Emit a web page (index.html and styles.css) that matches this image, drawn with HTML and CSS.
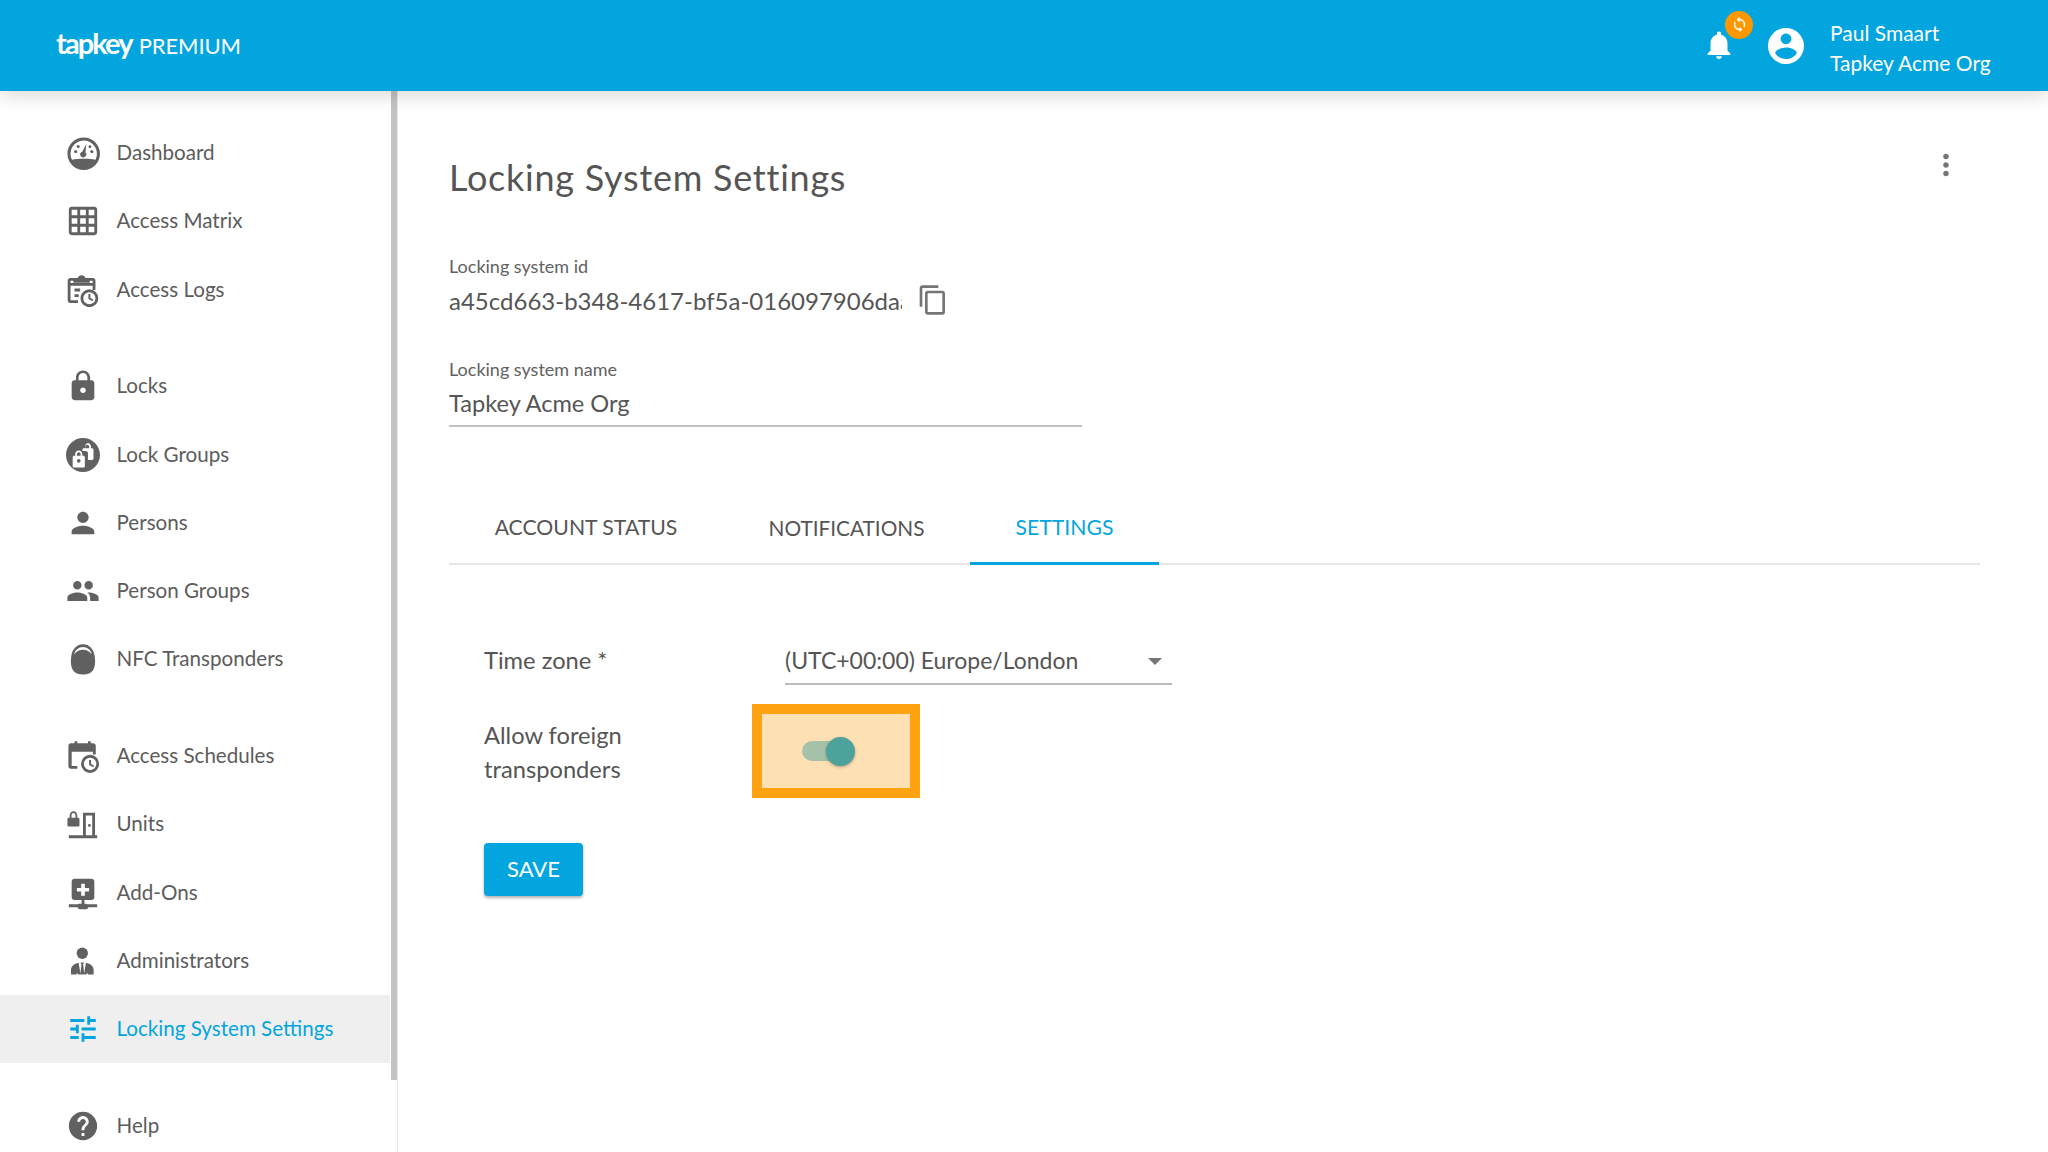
FILE: index.html
```html
<!DOCTYPE html>
<html lang="en">
<head>
<meta charset="utf-8">
<title>Locking System Settings</title>
<link rel="stylesheet" href="styles.css">
</head>
<body>
<header class="topbar">
  <div class="brand"><span class="brand-name">tapkey</span><span class="brand-tier">PREMIUM</span></div>
  <div class="top-actions">
    <div class="bell-wrap">
      <svg class="bell" viewBox="0 0 24 24"><path d="M12 22c1.1 0 2-.9 2-2h-4c0 1.1.89 2 2 2zm6-6v-5c0-3.07-1.64-5.64-4.5-6.32V4c0-.83-.67-1.5-1.5-1.5s-1.5.67-1.5 1.5v.68C7.63 5.36 6 7.92 6 11v5l-2 2v1h16v-1l-2-2z"/></svg>
      <span class="badge"><svg viewBox="0 0 24 24"><path d="M12 4V1L8 5l4 4V6c3.31 0 6 2.69 6 6 0 1.01-.25 1.97-.7 2.8l1.46 1.46C19.54 15.03 20 13.57 20 12c0-4.42-3.58-8-8-8zm0 14c-3.31 0-6-2.69-6-6 0-1.01.25-1.97.7-2.8L5.24 7.74C4.46 8.97 4 10.43 4 12c0 4.42 3.58 8 8 8v3l4-4-4-4v3z"/></svg></span>
    </div>
    <svg class="avatar" viewBox="2 2 20 20"><path d="M12 2C6.48 2 2 6.48 2 12s4.48 10 10 10 10-4.48 10-10S17.52 2 12 2zm0 3c1.66 0 3 1.34 3 3s-1.34 3-3 3-3-1.34-3-3 1.34-3 3-3zm0 14.2c-2.5 0-4.71-1.28-6-3.22.03-1.99 4-3.08 6-3.08 1.99 0 5.97 1.09 6 3.08-1.29 1.94-3.5 3.22-6 3.22z"/></svg>
    <div class="user"><div>Paul Smaart</div><div>Tapkey Acme Org</div></div>
  </div>
</header>
<div class="shell">
  <aside class="sidebar">
    <nav class="nav-group">
      <a class="nav-item"><svg class="ico" viewBox="0 0 24 24"><path fill-rule="evenodd" d="M12.5 1C6.150 1 1 6.150 1 12.500S6.150 24 12.500 24 24 18.850 24 12.500 18.850 1 12.500 1zm0 2.200a9.300 9.300 0 0 1 9.300 9.300c0 1.500-.35 2.900-1 4.200-2.200-.5-5-.7-8.300-.7s-6.100.2-8.300.7a9.300 9.300 0 0 1 8.300-13.500z"/><path d="M14.400 5.600l-.7 6a2.100 2.100 0 1 1-3-.1c.3-.2.5-.3.8-.4l2.900-5.500z"/><circle cx="6.800" cy="11" r="1.100"/><circle cx="8.600" cy="7.400" r="1.100"/><circle cx="18.200" cy="11" r="1.100"/><circle cx="16.900" cy="7.600" r="1"/></svg><span>Dashboard</span></a>
      <a class="nav-item"><svg class="ico" viewBox="0 0 24 24"><path d="M20 2H4c-1.1 0-2 .9-2 2v16c0 1.1.9 2 2 2h16c1.1 0 2-.9 2-2V4c0-1.1-.9-2-2-2zM8 20H4v-4h4v4zm0-6H4v-4h4v4zm0-6H4V4h4v4zm6 12h-4v-4h4v4zm0-6h-4v-4h4v4zm0-6h-4V4h4v4zm6 12h-4v-4h4v4zm0-6h-4v-4h4v4zm0-6h-4V4h4v4z"/></svg><span>Access Matrix</span></a>
      <a class="nav-item"><svg class="ico" viewBox="0 0 24 24"><path fill-rule="evenodd" d="M3 3.5h5.2C8.6 2.300 9.700 1.500 11 1.500s2.400.8 2.800 2H19c1 0 1.800.8 1.800 1.800V12h-2V9H3.200v10.200H8.500v2H3c-1 0-1.800-.8-1.800-1.800V5.300C1.200 4.300 2 3.500 3 3.500zM3.200 5.500V7h15.600V5.500h-2v1.300H5.200V5.500z"/><path d="M6 11h4v2H6zM6 15h3v2H6z"/><path fill-rule="evenodd" d="M16.500 11.500a6.300 6.300 0 1 0 0 12.600 6.300 6.300 0 0 0 0-12.600zm0 2a4.300 4.300 0 1 1 0 8.600 4.300 4.300 0 0 1 0-8.600z"/><path d="M15.800 14.800h1.400v2.800l2.200 1.300-.7 1.100-2.900-1.700z"/></svg><span>Access Logs</span></a>
    </nav>
    <nav class="nav-group">
      <a class="nav-item"><svg class="ico" viewBox="0 0 24 24"><path d="M18 8h-1V6c0-2.760-2.240-5-5-5S7 3.240 7 6v2H6c-1.100 0-2 .9-2 2v10c0 1.100.9 2 2 2h12c1.100 0 2-.9 2-2V10c0-1.100-.9-2-2-2zm-6 9c-1.100 0-2-.9-2-2s.9-2 2-2 2 .9 2 2-.9 2-2 2zm3.100-9H8.900V6c0-1.710 1.390-3.100 3.100-3.100 1.710 0 3.100 1.390 3.100 3.100v2z"/></svg><span>Locks</span></a>
      <a class="nav-item"><svg class="ico" viewBox="0 0 24 24"><path fill-rule="evenodd" d="M12 0C5.400 0 0 5.400 0 12s5.400 12 12 12 12-5.400 12-12S18.600 0 12 0zM15 3.500c1.500 0 2.600 1.100 2.600 2.500v1.200h.8c.6 0 1 .5 1 1v6.300c0 .6-.4 1-1 1h-2.900v-4.700c0-.9-.7-1.600-1.600-1.600h-2.300V8.200c0-.5.4-1 1-1h.9V6c0-1.400 1-2.500 2.500-2.500zm0 1.200c-.7 0-1.300.6-1.300 1.300v1.200h2.600V6c0-.7-.6-1.300-1.300-1.300zm-6 4.200c1.500 0 2.500 1.100 2.500 2.500v1.200h.8c.6 0 1 .5 1 1v6.300c0 .6-.4 1-1 1H5.700c-.6 0-1-.4-1-1V13.600c0-.5.4-1 1-1h.8v-1.200c0-1.400 1.100-2.500 2.500-2.500zm0 1.200c-.7 0-1.300.6-1.300 1.300v1.200h2.600v-1.200c0-.7-.6-1.300-1.300-1.300zm0 4.700a1.300 1.300 0 1 0 0 2.600 1.300 1.300 0 0 0 0-2.600z"/></svg><span>Lock Groups</span></a>
      <a class="nav-item"><svg class="ico" viewBox="0 0 24 24"><path d="M12 12c2.210 0 4-1.790 4-4s-1.790-4-4-4-4 1.790-4 4 1.790 4 4 4zm0 2c-2.670 0-8 1.340-8 4v2h16v-2c0-2.660-5.330-4-8-4z"/></svg><span>Persons</span></a>
      <a class="nav-item"><svg class="ico" viewBox="0 0 24 24"><path d="M16 11c1.660 0 2.990-1.340 2.990-3S17.660 5 16 5c-1.660 0-3 1.340-3 3s1.340 3 3 3zm-8 0c1.660 0 2.990-1.340 2.990-3S9.660 5 8 5C6.340 5 5 6.340 5 8s1.340 3 3 3zm0 2c-2.330 0-7 1.170-7 3.500V19h14v-2.500c0-2.330-4.670-3.500-7-3.500zm8 0c-.29 0-.62.02-.97.05 1.160.84 1.970 1.970 1.970 3.450V19h6v-2.500c0-2.330-4.670-3.500-7-3.500z"/></svg><span>Person Groups</span></a>
      <a class="nav-item"><svg class="ico" viewBox="0 0 24 24"><path fill-rule="evenodd" d="M12 1.500C7.500 1.500 4.500 5 3.800 9.500c-.7 4.200-.5 7.800 1 10.200 1.300 2 4 3.300 7.200 3.300s5.900-1.300 7.200-3.300c1.500-2.400 1.700-6 1-10.200C19.500 5 16.500 1.500 12 1.500zm0 2c3 0 5.400 2 6.300 5.100C16.500 6.500 14.300 5.500 12 5.500s-4.500 1-6.300 3.100C6.600 5.500 9 3.500 12 3.500z"/></svg><span>NFC Transponders</span></a>
    </nav>
    <nav class="nav-group">
      <a class="nav-item"><svg class="ico" viewBox="0 0 24 24"><path fill-rule="evenodd" d="M3.500 3H6V1.500h2V3h7.500V1.500h2V3h1.700c1 0 1.800.8 1.800 1.800V11h-2V9H4v10h4v2H3.500c-1 0-1.800-.8-1.800-1.800V4.800C1.700 3.800 2.500 3 3.500 3z"/><path fill-rule="evenodd" d="M17 11.200a6.400 6.400 0 1 0 0 12.800 6.400 6.400 0 0 0 0-12.800zm0 2a4.400 4.400 0 1 1 0 8.800 4.400 4.400 0 0 1 0-8.800z"/><path d="M16.300 14.800h1.400v2.800l2.200 1.300-.7 1.100-2.900-1.700z"/></svg><span>Access Schedules</span></a>
      <a class="nav-item"><svg class="ico" viewBox="0 0 24 24"><path d="M1 8.500c0-.6.4-1 1-1h.6V5.800C2.600 4.200 3.800 3 5.300 3S8 4.200 8 5.800V7.500h.5c.6 0 1 .4 1 1v4.300c0 .6-.4 1-1 1H2c-.6 0-1-.4-1-1zM3.900 7.500h2.800V5.800c0-.8-.6-1.500-1.400-1.500s-1.400.7-1.400 1.500z"/><path fill-rule="evenodd" d="M12 4h8.500v16H22v2H2v-2h10zm2 2v14h4.500V6z"/><circle cx="16.500" cy="13" r="1"/></svg><span>Units</span></a>
      <a class="nav-item"><svg class="ico" viewBox="0 0 24 24"><path fill-rule="evenodd" d="M6 2h12c1.100 0 2 .9 2 2v11c0 1.100-.9 2-2 2h-5v2.500h1c.3 0 .6.2.8.5H22v2h-6.200c-.2.9-1 1.500-1.800 1.500h-4c-.8 0-1.600-.6-1.800-1.500H2v-2h6.200c.2-.3.5-.5.8-.5h2V17H6c-1.100 0-2-.9-2-2V4c0-1.100.9-2 2-2zm4.700 3.500v3h-3v2.400h3v3h2.600v-3h3V8.500h-3v-3z"/></svg><span>Add-Ons</span></a>
      <a class="nav-item"><svg class="ico" viewBox="0 0 24 24"><circle cx="11.500" cy="6.500" r="4"/><path fill-rule="evenodd" d="M3.500 21.500v-3.300c0-2.300 1.500-3.700 3.700-4.500l1.700-.5 1.400 8.300H8.800l-1-1-.3 1zm16 0v-3.300c0-2.300-1.500-3.700-3.700-4.500l-1.700-.5-1.400 8.300h1.500l1-1 .3 1zM10.300 13h2.400l-.6 1.500.8 7h-2.800l.8-7z"/></svg><span>Administrators</span></a>
      <a class="nav-item active"><svg class="ico" viewBox="0 0 24 24"><path d="M3 17v2h6v-2H3zM3 5v2h10V5H3zm10 16v-2h8v-2h-8v-2h-2v6h2zM7 9v2H3v2h4v2h2V9H7zm14 4v-2H11v2h10zm-6-4h2V7h4V5h-4V3h-2v6z"/></svg><span>Locking System Settings</span></a>
    </nav>
    <nav class="nav-group">
      <a class="nav-item"><svg class="ico" viewBox="0 0 24 24"><path d="M12 2C6.480 2 2 6.480 2 12s4.480 10 10 10 10-4.480 10-10S17.520 2 12 2zm1 17h-2v-2h2v2zm2.070-7.750l-.9.92C13.450 12.900 13 13.500 13 15h-2v-.5c0-1.100.45-2.100 1.170-2.830l1.240-1.260c.37-.36.59-.86.59-1.410 0-1.100-.9-2-2-2s-2 .9-2 2H8c0-2.210 1.790-4 4-4s4 1.790 4 4c0 .88-.36 1.680-.93 2.250z"/></svg><span>Help</span></a>
    </nav>
    <div class="scroll-thumb"></div>
  </aside>
  <main class="content">
    <div class="title-row">
      <h1 class="title">Locking System Settings</h1>
      <svg class="more" viewBox="0 0 24 24"><path d="M12 8c1.100 0 2-.9 2-2s-.9-2-2-2-2 .9-2 2 .9 2 2 2zm0 2c-1.100 0-2 .9-2 2s.9 2 2 2 2-.9 2-2-.9-2-2-2zm0 6c-1.100 0-2 .9-2 2s.9 2 2 2 2-.9 2-2-.9-2-2-2z"/></svg>
    </div>
    <div class="field-id">
      <div class="field-label">Locking system id</div>
      <div class="id-row">
        <span class="id-value">a45cd663-b348-4617-bf5a-016097906daa</span>
        <svg class="copy" viewBox="0 0 24 24"><path d="M16 1H4c-1.100 0-2 .9-2 2v14h2V3h12V1zm3 4H8c-1.100 0-2 .9-2 2v14c0 1.100.9 2 2 2h11c1.100 0 2-.9 2-2V7c0-1.100-.9-2-2-2zm0 16H8V7h11v14z"/></svg>
      </div>
    </div>
    <div class="field-name">
      <div class="field-label">Locking system name</div>
      <div class="name-value">Tapkey Acme Org</div>
    </div>
    <div class="tabs">
      <div class="tab tab-account">ACCOUNT STATUS</div>
      <div class="tab tab-notifications">NOTIFICATIONS</div>
      <div class="tab tab-settings">SETTINGS</div>
    </div>
    <form class="settings">
      <div class="row-time">
        <div class="row-label">Time zone *</div>
        <div class="select"><span>(UTC+00:00) Europe/London</span><i class="caret"></i></div>
      </div>
      <div class="row-foreign">
        <div class="row-label foreign-label">Allow foreign transponders</div>
        <div class="highlight"><div class="switch"><div class="track"></div><div class="thumb"></div></div></div>
      </div>
      <div class="save">SAVE</div>
    </form>
  </main>
</div>
</body>
</html>
```
FILE: styles.css
```css
* { box-sizing: border-box; }
html, body { margin: 0; height: 100%; }
body {
  width: 2048px; height: 1152px; overflow: hidden; background: #fff;
  font-family: "Lato", "Noto Sans", sans-serif; color: #5c5c5c;
  display: flex; flex-direction: column;
}
.topbar {
  height: 91px; flex: none; background: #03a5df; color: #fff;
  display: flex; align-items: center; justify-content: space-between;
  padding: 0 48px 0 56px; position: relative; z-index: 2;
  box-shadow: 0 4px 18px rgba(0,0,0,.16);
}
.brand { display: flex; align-items: baseline; gap: 7px; margin-top: -7px; }
.brand-name { font-size: 29px; font-weight: 700; letter-spacing: -1.9px; }
.brand-tier { font-size: 22px; font-weight: 400; letter-spacing: -.1px; }
.top-actions { display: flex; align-items: center; }
.bell-wrap { position: relative; width: 34px; height: 34px; margin-right: 32px; }
.bell { width: 34px; height: 34px; fill: #fff; display: block; margin-top: -1px; }
.badge {
  position: absolute; left: 23px; top: -18px; width: 28px; height: 28px; border-radius: 50%;
  background: #ff9800; display: flex; align-items: center; justify-content: center;
}
.badge svg { width: 17px; height: 17px; fill: #fff; }
.avatar { width: 36px; height: 36px; fill: #fff; margin-right: 26px; display: block; }
.user { font-size: 21px; line-height: 30px; width: 170px; padding-top: 5px; }

.shell { flex: 1; display: flex; min-height: 0; }
.sidebar {
  width: 398px; flex: none; position: relative; padding: 28px 7px 0 0;
  border-right: 1px solid #e8e8e8; display: flex; flex-direction: column; gap: 28.5px;
}
.scroll-thumb { position: absolute; left: 391px; top: 0; width: 6px; height: 989px; background: #c4c4c4; }
.nav-item {
  height: 68.25px; display: flex; align-items: center; gap: 17px; padding-left: 66px;
  font-size: 20.6px; color: #5c5c5c;
}
.nav-item span { margin-top: -2px; margin-left: -.5px; }
.ico { width: 34px; height: 34px; fill: #616161; flex: none; }
.nav-item.active { background: #efefef; color: #03a5df; }
.nav-item.active .ico { fill: #03a5df; }

.content { flex: 1; padding: 0 68px 0 51px; min-width: 0; }
.title-row { height: 67px; margin-top: 52px; display: flex; align-items: center; justify-content: space-between; position: relative; }
.title { margin: 0; font-size: 36px; line-height: 46px; font-weight: 400; letter-spacing: .75px; color: #555; }
.more { position: absolute; right: 17px; top: 5px; width: 34px; height: 34px; fill: #757575; }
.field-id { margin-top: 44px; }
.field-label { font-size: 18px; line-height: 24px; color: #616161; }
.id-row { display: flex; align-items: center; height: 40px; margin-top: 2px; }
.id-value { width: 453px; overflow: hidden; white-space: nowrap; font-size: 24px; color: #555; }
.copy { width: 32px; height: 32px; fill: #757575; margin-left: 15px; }
.field-name { width: 633px; margin-top: 37px; border-bottom: 2px solid #c2c2c2; height: 70px; }
.name-value { font-size: 23.6px; line-height: 38px; margin-top: 2.5px; color: #555; }
.tabs { margin-top: 60px; height: 78px; display: flex; border-bottom: 2px solid #e6e6e6; width: 1531px; }
.tab { display: flex; align-items: center; justify-content: center; height: 78px; padding-top: 2px; font-size: 21.2px; color: #555; flex: none; }
.tab-account { width: 274px; }
.tab-notifications { width: 247px; font-size: 20.8px; }
.tab-settings { width: 189px; color: #03a5df; box-shadow: inset 0 -3px 0 #03a5df; }
.settings { padding-left: 35px; }
.row-time { display: flex; margin-top: 74px; height: 46px; }
.row-label { width: 301px; font-size: 23.7px; line-height: 34px; color: #555; flex: none; padding-top: 4px; }
.select {
  width: 387px; height: 46px; border-bottom: 2px solid #bdbdbd; position: relative; padding-top: 4px;
  font-size: 23px; line-height: 34px; color: #555;
}
.caret {
  position: absolute; right: 10px; top: 19px; width: 0; height: 0;
  border-left: 7px solid transparent; border-right: 7px solid transparent; border-top: 7px solid #757575;
}
.row-foreign { display: flex; margin-top: 19px; height: 94px; }
.foreign-label { width: 268px; padding-top: 14px; }
.highlight {
  width: 168px; height: 94px; border: 10px solid #ffa312; background: #fde0b3;
  display: flex; align-items: center; justify-content: center;
}
.switch { position: relative; width: 53px; height: 29px; margin-right: 16px; }
.track { position: absolute; left: 0; top: 4px; width: 48px; height: 20px; border-radius: 10px; background: #a5c2a9; }
.thumb { position: absolute; right: 0; top: 0; width: 29px; height: 29px; border-radius: 50%; background: #4da39c; box-shadow: 0 1px 3px rgba(0,0,0,.3); }
.save {
  margin-top: 45px; width: 99px; height: 53px; padding-bottom: 2px; border-radius: 4px; background: #03a5df; color: #fff;
  display: flex; align-items: center; justify-content: center; font-size: 22px; font-weight: 400;
  box-shadow: 0 2px 3px rgba(0,0,0,.3);
}
```
